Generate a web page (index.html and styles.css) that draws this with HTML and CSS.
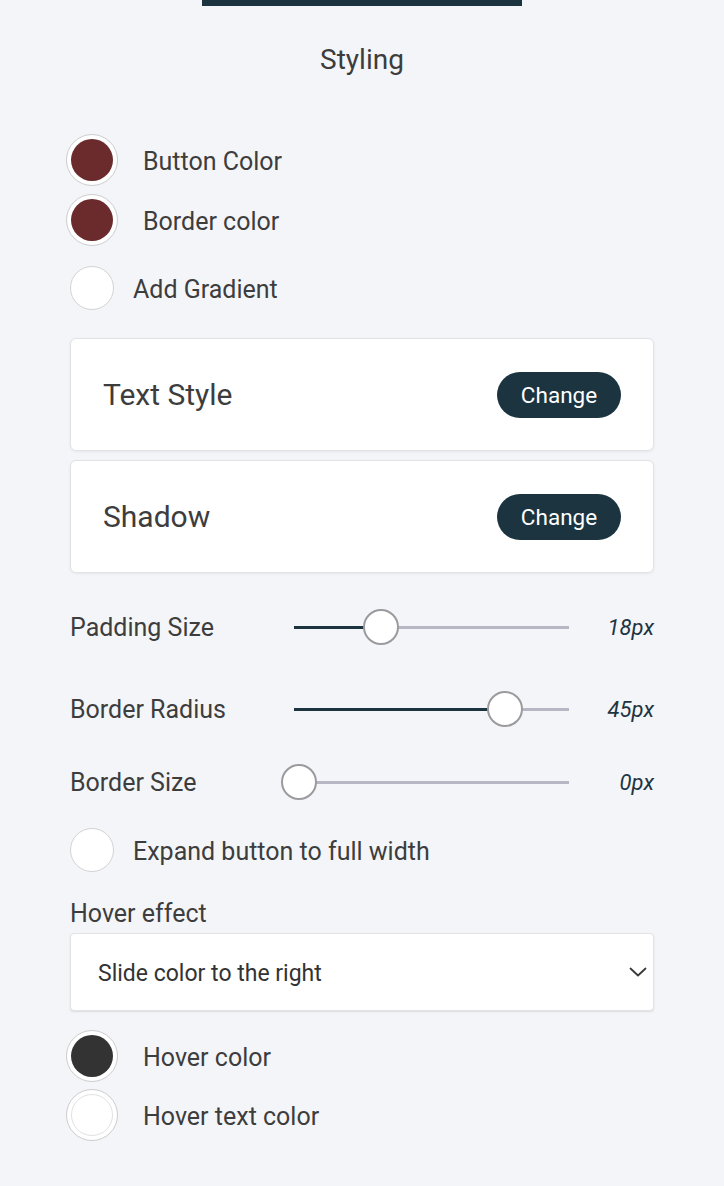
FILE: index.html
```html
<!DOCTYPE html>
<html lang="en">
<head>
<meta charset="utf-8">
<title>Styling</title>
<link rel="stylesheet" href="styles.css">
</head>
<body>
<div class="topbar"></div>
<div class="panel">
  <h2 class="title">Styling</h2>

  <div class="swatches">
    <div class="swatch-row">
      <span class="swatch"><span class="swatch-fill maroon"></span></span>
      <span class="label">Button Color</span>
    </div>
    <div class="swatch-row">
      <span class="swatch"><span class="swatch-fill maroon"></span></span>
      <span class="label">Border color</span>
    </div>
  </div>

  <div class="toggle-row gradient">
    <span class="toggle"></span>
    <span class="label">Add Gradient</span>
  </div>

  <div class="cards">
    <div class="card">
      <span class="card-title">Text Style</span>
      <button class="change-btn">Change</button>
    </div>
    <div class="card">
      <span class="card-title">Shadow</span>
      <button class="change-btn">Change</button>
    </div>
  </div>

  <div class="sliders">
    <div class="slider-row first">
      <span class="label">Padding Size</span>
      <div class="track" style="--pos:87px"><span class="fill"></span><span class="thumb"></span></div>
      <span class="value">18px</span>
    </div>
    <div class="slider-row second">
      <span class="label">Border Radius</span>
      <div class="track" style="--pos:211px"><span class="fill"></span><span class="thumb"></span></div>
      <span class="value">45px</span>
    </div>
    <div class="slider-row third">
      <span class="label">Border Size</span>
      <div class="track" style="--pos:5px"><span class="fill empty"></span><span class="thumb"></span></div>
      <span class="value">0px</span>
    </div>
  </div>

  <div class="toggle-row expand">
    <span class="toggle"></span>
    <span class="label">Expand button to full width</span>
  </div>

  <div class="field-label">Hover effect</div>
  <div class="select">
    <span class="select-text">Slide color to the right</span>
    <svg class="chevron" width="18" height="10" viewBox="0 0 18 10"><polyline points="1.5,1.5 9,8.5 16.5,1.5" fill="none" stroke="#3a3a3a" stroke-width="1.8" stroke-linecap="round" stroke-linejoin="round"/></svg>
  </div>

  <div class="swatches hover">
    <div class="swatch-row">
      <span class="swatch"><span class="swatch-fill dark"></span></span>
      <span class="label">Hover color</span>
    </div>
    <div class="swatch-row">
      <span class="swatch"><span class="swatch-fill white"></span></span>
      <span class="label">Hover text color</span>
    </div>
  </div>
</div>
</body>
</html>
```
FILE: styles.css
```css
* { box-sizing: border-box; }

body {
  margin: 0;
  background: #f4f5f9;
  font-family: Roboto, "Liberation Sans", sans-serif;
  color: #3d3d3d;
}

.topbar {
  width: 320px;
  height: 6px;
  margin: 0 auto;
  background: #1b3440;
}

.panel {
  width: 584px;
  margin: 0 auto;
  display: flex;
  flex-direction: column;
}

.title {
  margin: 39px 0 0;
  font-size: 28px;
  line-height: 30px;
  font-weight: 400;
  text-align: center;
  color: #3d3d3d;
}

.label {
  font-size: 25px;
  line-height: 28px;
  padding-top: 3px;
  color: #3d3d3d;
}

.slider-row .label { padding-top: 1px; }

.swatches {
  margin-top: 59px;
  display: flex;
  flex-direction: column;
  gap: 8px;
}

.swatches.hover {
  margin-top: 19px;
  gap: 7px;
}

.swatch-row {
  display: flex;
  align-items: center;
  gap: 25px;
  margin-left: -4px;
  height: 52px;
}

.swatch {
  width: 52px;
  height: 52px;
  border-radius: 50%;
  background: #fff;
  border: 1px solid #cdcdcd;
  display: flex;
  align-items: center;
  justify-content: center;
  flex: none;
}

.swatch-fill {
  width: 42px;
  height: 42px;
  border-radius: 50%;
}

.swatch-fill.maroon { background: #6b2a2b; }
.swatch-fill.dark { background: #333333; }
.swatch-fill.white { background: #fff; border: 1px solid #e2e2e2; }

.toggle-row {
  display: flex;
  align-items: center;
  gap: 19px;
  height: 44px;
}

.toggle-row.gradient { margin-top: 20px; }
.toggle-row.expand { margin-top: 28px; }

.toggle {
  width: 44px;
  height: 44px;
  border-radius: 50%;
  background: #fff;
  border: 1px solid #d3d3d3;
  flex: none;
}

.cards {
  margin-top: 28px;
  display: flex;
  flex-direction: column;
  gap: 9px;
}

.card {
  height: 113px;
  background: #fff;
  border: 1px solid #e1e2e6;
  border-radius: 6px;
  box-shadow: 0 1px 3px rgba(0, 0, 0, 0.06);
  display: flex;
  align-items: center;
  justify-content: space-between;
  padding: 0 32px 0 32px;
}

.card-title {
  font-size: 30px;
  line-height: 34px;
  padding-top: 1px;
  color: #3d3d3d;
}

.change-btn {
  width: 124px;
  height: 46px;
  border: none;
  border-radius: 23px;
  background: #1b3440;
  color: #fff;
  font-family: Roboto, "Liberation Sans", sans-serif;
  font-size: 22.5px;
  padding: 0;
}

.sliders {
  margin-top: 36px;
  display: flex;
  flex-direction: column;
}

.slider-row {
  display: grid;
  grid-template-columns: 224px 275px 1fr;
  align-items: center;
  height: 36px;
}

.slider-row.second { margin-top: 46px; }
.slider-row.third { margin-top: 37px; }

.track {
  position: relative;
  height: 3px;
  background: #b6b6c4;
}

.fill {
  position: absolute;
  left: 0;
  top: 0;
  height: 3px;
  width: var(--pos);
  background: #1b3440;
}

.fill.empty { width: 0; }

.thumb {
  position: absolute;
  top: -16.5px;
  left: calc(var(--pos) - 18px);
  width: 36px;
  height: 36px;
  border-radius: 50%;
  background: #fff;
  border: 2px solid #9b9b9f;
}

.value {
  text-align: right;
  font-size: 22px;
  font-style: italic;
  color: #1d3441;
}

.field-label {
  margin-top: 28px;
  font-size: 25px;
  line-height: 28px;
  color: #3d3d3d;
}

.select {
  margin-top: 5px;
  height: 78px;
  background: #fff;
  border: 1px solid #e3e3e6;
  border-radius: 4px;
  box-shadow: 0 1px 2px rgba(0, 0, 0, 0.1);
  display: flex;
  align-items: center;
  justify-content: space-between;
  padding: 0 6px 0 27px;
}

.select-text {
  font-size: 23px;
  padding-top: 2px;
  color: #333;
}

.chevron { flex: none; }
```
